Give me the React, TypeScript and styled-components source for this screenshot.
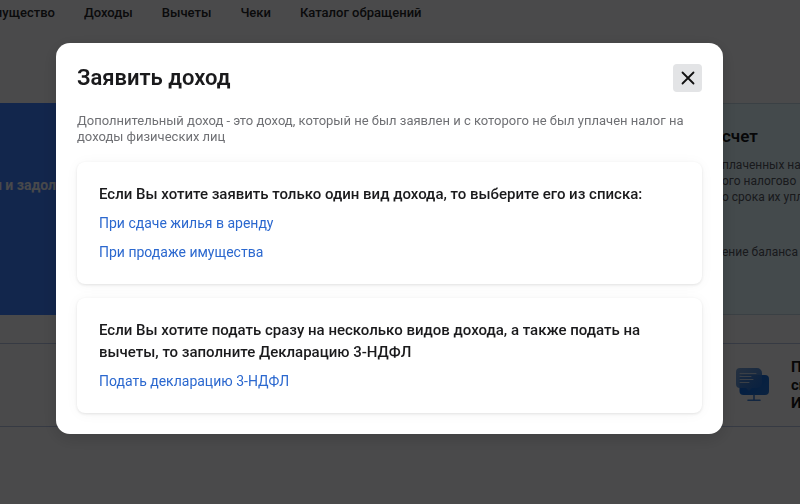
import React from 'react';
import styled, { createGlobalStyle } from 'styled-components';

const GlobalStyle = createGlobalStyle`
  * { box-sizing: border-box; }
  html, body, #root { height: 100%; }
  body {
    margin: 0;
    overflow: hidden;
    background: #f8f8fa;
    color: #1a1a1c;
    font-family: Roboto, "Noto Sans", sans-serif;
  }
  h1, h2, h3, p, ul { margin: 0; padding: 0; }
`;

const Page = styled.div`
  min-height: 100%;
  overflow: hidden;
`;

const Nav = styled.nav`
  display: flex;
  gap: 29px;
  height: 26px;
  margin-bottom: 77px;
  align-items: center;
`;

const NavLink = styled.a<{ $clipped?: boolean }>`
  display: flex;
  justify-content: flex-end;
  width: ${(p) => (p.$clipped ? '55px' : 'auto')};
  overflow: hidden;
  color: #26272b;
  font-size: 13px;
  line-height: 18px;
  font-weight: 500;
  white-space: nowrap;
  text-decoration: none;
`;

const Hero = styled.section`
  display: grid;
  grid-template-columns: minmax(0, 1fr) 80px;
  height: 212px;
  margin-bottom: 28px;
`;

const DebtCard = styled.div`
  display: flex;
  width: 56px;
  justify-content: flex-end;
  padding-top: 73px;
  overflow: hidden;
  background: #3f7fff;
  color: #f0f3fa;
  font-size: 14px;
  line-height: 18px;
  font-weight: 700;
  white-space: nowrap;
`;

const AccountCard = styled.div`
  padding: 22px 0 0 2px;
  overflow: hidden;
  border: solid #c4d6e4;
  border-width: 1px 0;
  background: #e3f7ff;
  white-space: nowrap;
`;

const AccountTitle = styled.h2`
  margin-bottom: 11px;
  font-size: 17px;
  line-height: 20px;
  font-weight: 600;
`;

const AccountText = styled.p`
  margin-bottom: 39px;
  color: #55585f;
  font-size: 12px;
  line-height: 16px;
`;

const Service = styled.section`
  display: flex;
  justify-content: flex-end;
  align-items: center;
  gap: 20px;
  height: 84px;
  border: solid #b4c2e2;
  border-width: 1px 0;
`;

const ServiceName = styled.h3`
  width: 9px;
  overflow: hidden;
  font-size: 15px;
  line-height: 18px;
  font-weight: 700;
`;

const Overlay = styled.div`
  position: fixed;
  inset: 0;
  padding: 43px 77px 43px 56px;
  background: rgba(0, 0, 0, 0.7);
`;

const Dialog = styled.div`
  padding: 21px;
  border-radius: 14px;
  background: #fff;
  box-shadow: 0 4px 18px rgba(0, 0, 0, 0.16);
`;

const DialogHeader = styled.header`
  display: flex;
  justify-content: space-between;
  align-items: center;
  margin-bottom: 21px;
`;

const DialogTitle = styled.h1`
  font-size: 22px;
  line-height: 28px;
  font-weight: 600;
`;

const CloseButton = styled.button`
  display: grid;
  place-items: center;
  width: 29px;
  height: 28px;
  padding: 0;
  border: 0;
  border-radius: 4px;
  background: #e3e4e6;
  cursor: pointer;
`;

const Description = styled.p`
  margin-bottom: 17px;
  color: #6f7074;
  font-size: 13px;
  line-height: 16px;
`;

const Cards = styled.div`
  display: flex;
  flex-direction: column;
  gap: 14px;
`;

const Card = styled.section`
  padding: 21px 22px;
  border-radius: 8px;
  background: #fff;
  box-shadow: 0 1px 3px rgba(0, 0, 0, 0.1), 0 1px 14px rgba(0, 0, 0, 0.04);
`;

const CardTitle = styled.h2`
  font-size: 15px;
  line-height: 22px;
  font-weight: 500;
`;

const LinkList = styled.ul`
  list-style: none;
`;

const LinkItem = styled.li`
  margin-top: 7px;
  font-size: 14px;
  line-height: 22px;
`;

const Link = styled.a`
  color: #2b68cf;
  text-decoration: none;
`;

function CloseIcon() {
  return (
    <svg width="14" height="14" viewBox="0 0 14 14" fill="none" aria-hidden="true">
      <path d="M1.5 1.5L12.5 12.5M12.5 1.5L1.5 12.5" stroke="#111" strokeWidth="1.8" strokeLinecap="round" />
    </svg>
  );
}

function ChatScreenIcon() {
  return (
    <svg width="36" height="36" viewBox="0 0 36 36" fill="none" aria-hidden="true">
      <defs>
        <linearGradient id="screen" x1="8" y1="8" x2="32" y2="29" gradientUnits="userSpaceOnUse">
          <stop stopColor="#0863de" />
          <stop offset="1" stopColor="#2473d4" />
        </linearGradient>
        <linearGradient id="bubble" x1="2" y1="2" x2="26" y2="25" gradientUnits="userSpaceOnUse">
          <stop stopColor="#6794cf" />
          <stop offset="1" stopColor="#1c6cd6" />
        </linearGradient>
      </defs>
      <rect x="4.5" y="8" width="29.5" height="20" rx="4" fill="url(#screen)" />
      <path d="M19 28v5M13 33.2h12" stroke="#3c7fd9" strokeWidth="1.6" strokeLinecap="round" />
      <path d="M5 1h17a5 5 0 0 1 5 5v10a5 5 0 0 1-5 5h-5l-3 3-3-3H5a4 4 0 0 1-4-4V5a4 4 0 0 1 4-4z" fill="url(#bubble)" fillOpacity=".88" />
      <path d="M5 6.5h16M5 9.5h11M5 12.5h13M5 15.5h9" stroke="#c2d3ec" strokeWidth="1" strokeLinecap="round" />
    </svg>
  );
}

const options = [
  {
    title: 'Если Вы хотите заявить только один вид дохода, то выберите его из списка:',
    links: ['При сдаче жилья в аренду', 'При продаже имущества'],
  },
  {
    title: 'Если Вы хотите подать сразу на несколько видов дохода, а также подать на вычеты, то заполните Декларацию 3-НДФЛ',
    links: ['Подать декларацию 3-НДФЛ'],
  },
];

export default function App() {
  return (
    <>
      <GlobalStyle />
      <Page>
        <Nav>
          <NavLink href="#property" $clipped>Имущество</NavLink>
          <NavLink href="#income">Доходы</NavLink>
          <NavLink href="#deductions">Вычеты</NavLink>
          <NavLink href="#receipts">Чеки</NavLink>
          <NavLink href="#catalog">Каталог обращений</NavLink>
        </Nav>
        <Hero>
          <DebtCard>и и задол</DebtCard>
          <AccountCard>
            <AccountTitle>счет</AccountTitle>
            <AccountText>
              плаченных на
              <br />
              ого налогово
              <br />о срока их упл
            </AccountText>
            <AccountText>ение баланса</AccountText>
          </AccountCard>
        </Hero>
        <Service>
          <ChatScreenIcon />
          <ServiceName>
            П
            <br />
            си
            <br />И
          </ServiceName>
        </Service>
      </Page>
      <Overlay>
        <Dialog role="dialog" aria-modal="true" aria-labelledby="dialog-title">
          <DialogHeader>
            <DialogTitle id="dialog-title">Заявить доход</DialogTitle>
            <CloseButton type="button" aria-label="Закрыть">
              <CloseIcon />
            </CloseButton>
          </DialogHeader>
          <Description>
            Дополнительный доход - это доход, который не был заявлен и с которого не был уплачен налог на доходы физических лиц
          </Description>
          <Cards>
            {options.map((option) => (
              <Card key={option.title}>
                <CardTitle>{option.title}</CardTitle>
                <LinkList>
                  {option.links.map((label) => (
                    <LinkItem key={label}>
                      <Link href="#declare">{label}</Link>
                    </LinkItem>
                  ))}
                </LinkList>
              </Card>
            ))}
          </Cards>
        </Dialog>
      </Overlay>
    </>
  );
}
